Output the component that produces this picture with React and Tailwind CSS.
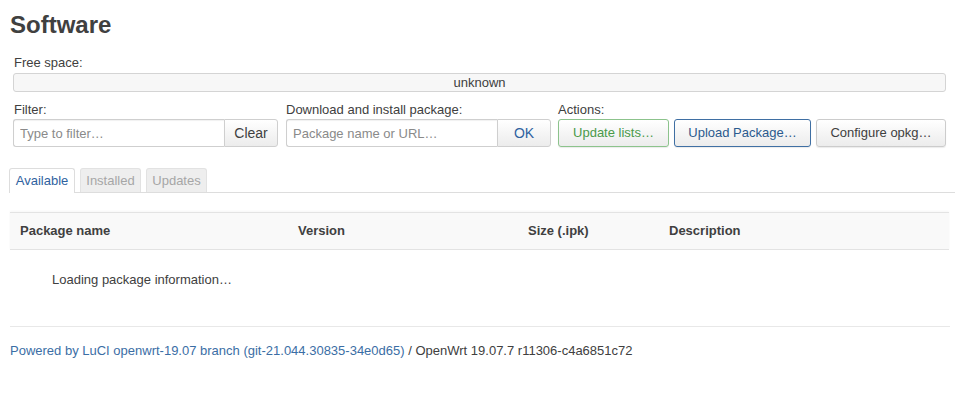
import React from 'react';

const font = { fontFamily: '"Liberation Sans", Arial, sans-serif' };

const Btn = ({ children, className = '' }) => (
    <button
        className={`h-[28px] rounded-[3px] border px-3 text-[13px] shadow-[0_1px_1px_rgba(0,0,0,0.08)] bg-gradient-to-b from-white to-[#ececec] ${className}`}
    >
        {children}
    </button>
);

const InputGroup = ({ placeholder, action, actionClass }) => (
    <div className="flex h-[28px] w-[265px]">
        <input
            placeholder={placeholder}
            className="h-full w-[211px] rounded-l-[3px] border border-r-0 border-[#cfcfcf] px-[6px] text-[13px] text-[#404040] placeholder-[#8a8a8a] shadow-[inset_0_1px_1px_rgba(0,0,0,0.06)] outline-none"
        />
        <button
            className={`h-full w-[54px] rounded-r-[3px] border border-[#cfcfcf] bg-gradient-to-b from-white to-[#ececec] text-[14px] ${actionClass}`}
        >
            {action}
        </button>
    </div>
);

export default function App() {
    return (
        <div style={font} className="min-h-[394px] bg-white px-[10px] text-[#404040]">
            {/* Title */}
            <h2 className="pt-[11px] text-[24px] font-bold leading-[28px] text-[#404040]">Software</h2>

            {/* Free space */}
            <div className="mt-[16px] pl-[3px]">
                <div className="text-[13px] leading-[15px] pl-[1px]">Free space:</div>
                <div className="mt-[3px] flex h-[19px] w-[933px] items-center justify-center rounded-[3px] border border-[#d4d4d4] bg-[#f7f7f7] text-[13px] text-[#404040]">
                    unknown
                </div>
            </div>

            {/* Controls */}
            <div className="mt-[10px] flex pl-[3px]">
                <div className="w-[265px]">
                    <div className="pl-[1px] text-[13px] leading-[15px]">Filter:</div>
                    <div className="mt-[2px]">
                        <InputGroup placeholder="Type to filter…" action="Clear" actionClass="text-[#404040]" />
                    </div>
                </div>
                <div className="ml-[8px] w-[265px]">
                    <div className="text-[13px] leading-[15px]">Download and install package:</div>
                    <div className="mt-[2px]">
                        <InputGroup placeholder="Package name or URL…" action="OK" actionClass="text-[#2f62a0]" />
                    </div>
                </div>
                <div className="ml-[7px]">
                    <div className="text-[13px] leading-[15px]">Actions:</div>
                    <div className="mt-[2px] flex gap-[5px]">
                        <Btn className="w-[111px] border-[#8cc38c] text-[#4a9a4a]">Update lists…</Btn>
                        <Btn className="w-[137px] border-[#3f6fa3] text-[#2b5a8e]">Upload Package…</Btn>
                        <Btn className="w-[130px] border-[#cccccc] text-[#404040]">Configure opkg…</Btn>
                    </div>
                </div>
            </div>

            {/* Tabs */}
            <div className="mt-[21px] flex h-[25px] w-[946px] -ml-[1px] items-end gap-[5px] border-b border-[#dddddd]">
                <div className="-mb-px flex h-[25px] w-[66px] items-center justify-center rounded-t-[3px] border border-b-0 border-[#dddddd] bg-white text-[13px] text-[#2f62a0]">
                    Available
                </div>
                <div className="flex h-[24px] w-[61px] items-center justify-center rounded-t-[3px] border border-b-0 border-[#e2e2e2] bg-[#eeeeee] text-[13px] text-[#a6a6a6]">
                    Installed
                </div>
                <div className="flex h-[24px] w-[61px] items-center justify-center rounded-t-[3px] border border-b-0 border-[#e2e2e2] bg-[#eeeeee] text-[13px] text-[#a6a6a6]">
                    Updates
                </div>
            </div>

            {/* Table */}
            <div className="mt-[19px] w-[939px]">
                <div className="flex h-[38px] items-center border-y border-[#e3e3e3] bg-[#f9f9f9] text-[13px] font-bold text-[#404040] shadow-[0_-1px_2px_rgba(0,0,0,0.04)]">
                    <div className="w-[288px] pl-[10px]">Package name</div>
                    <div className="w-[230px]">Version</div>
                    <div className="w-[141px]">Size (.ipk)</div>
                    <div>Description</div>
                </div>
                <div className="flex h-[60px] items-center pl-[42px] text-[13px] text-[#404040]">
                    Loading package information…
                </div>
            </div>

            {/* Footer */}
            <div className="mt-[16px] w-[940px] border-t border-[#e8e8e8]" />
            <footer className="mt-[16px] text-[13px] leading-[16px] text-[#404040]">
                <a className="text-[#3b6ea5]">Powered by LuCI openwrt-19.07 branch (git-21.044.30835-34e0d65)</a>
                {' / OpenWrt 19.07.7 r11306-c4a6851c72'}
            </footer>
        </div>
    );
}
